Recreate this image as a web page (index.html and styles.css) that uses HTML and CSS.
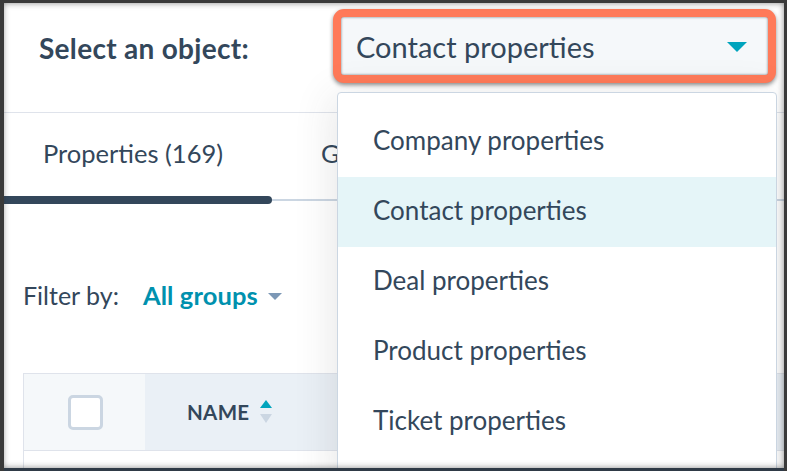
FILE: index.html
```html
<!DOCTYPE html>
<html>
<head>
<meta charset="utf-8">
<link rel="stylesheet" href="styles.css">
</head>
<body>
<div class="frame">
  <header class="topbar">
    <div class="label">Select an object:</div>
    <div class="select-ring">
      <div class="select">
        <span class="select-text">Contact properties</span>
        <span class="caret"></span>
      </div>
    </div>
  </header>

  <nav class="tabs">
    <div class="tab active">Properties (169)</div>
    <div class="tab tab-clipped"><span>Groups</span></div>
  </nav>

  <div class="filter">
    <span class="filter-label">Filter by:</span>
    <span class="filter-value">All groups</span>
    <span class="filter-caret"></span>
  </div>

  <div class="table">
    <div class="thead">
      <div class="th th-check"><span class="checkbox"></span></div>
      <div class="th th-name">NAME
        <span class="sort">
          <span class="sort-up"></span>
          <span class="sort-down"></span>
        </span>
      </div>
    </div>
    <div class="trow"></div>
  </div>

  <ul class="menu">
    <li class="menu-item">Company properties</li>
    <li class="menu-item selected">Contact properties</li>
    <li class="menu-item">Deal properties</li>
    <li class="menu-item">Product properties</li>
    <li class="menu-item">Ticket properties</li>
  </ul>
</div>
</body>
</html>
```

FILE: styles.css
```css
* { box-sizing: border-box; }
html, body { margin: 0; padding: 0; background: #fff; }
body {
  font-family: "Lato", "Noto Sans", sans-serif;
  color: #33475b;
}
.frame {
  position: relative;
  width: 787px;
  height: 471px;
  overflow: hidden;
  background: #fff;
}
.frame::after {
  content: "";
  position: absolute;
  inset: 0;
  pointer-events: none;
  box-shadow: inset 4px 0 0 #3a3a3a, inset 0 3px 0 #3a3a3a, inset -3px 0 0 #3a3a3a, inset 0 -3px 0 #2f3a46, inset 0 0 6px 3px rgba(40,40,40,0.55);
  z-index: 10;
}

/* Header */
.topbar {
  height: 113px;
  display: flex;
  align-items: flex-start;
  padding: 9px 0 0 39px;
  border-bottom: 1px solid #dfe3eb;
}
.label {
  flex: 0 0 294px;
  height: 74px;
  display: flex;
  align-items: center;
  font-weight: 700;
  font-size: 28px;
  letter-spacing: 0.3px;
  padding-top: 3px;
}
.select-ring {
  width: 443px;
  height: 74px;
  border: 8px solid #ff7a59;
  border-radius: 11px;
  box-shadow: 0 2px 4px rgba(0,0,0,0.45);
  background: #f5f8fa;
}
.select {
  height: 100%;
  display: flex;
  align-items: center;
  justify-content: space-between;
  padding: 0 21px 0 15px;
  box-shadow: inset 0 0 2px 1px rgba(70,80,90,0.35);
  border-radius: 2px;
}
.select-text {
  font-size: 29px;
}
.caret {
  width: 0;
  height: 0;
  border-left: 10px solid transparent;
  border-right: 10px solid transparent;
  border-top: 10px solid #00a4bd;
  margin-top: 2px;
}

/* Tabs */
.tabs {
  display: flex;
  height: 88px;
  position: relative;
  border-bottom: 2px solid #cbd6e2;
  margin-bottom: -2px;
}
.tab {
  font-size: 25.5px;
  display: flex;
  align-items: center;
  padding-bottom: 6px;
  white-space: nowrap;
}
.tab.active {
  width: 272px;
  justify-content: center;
  padding-right: 6px;
  position: relative;
}
.tab.active::after {
  content: "";
  position: absolute;
  left: 0;
  right: 0;
  bottom: -5px;
  height: 8px;
  background: #33475b;
  border-radius: 0 4px 4px 0;
}
.tab-clipped {
  width: 65px;
  overflow: hidden;
  padding-left: 49px;
}

/* Filter */
.filter {
  height: 172px;
  display: flex;
  align-items: center;
  padding: 16px 0 0 23px;
  font-size: 25px;
  margin-top: 2px;
}
.filter-label { margin-right: 24px; }
.filter-value {
  color: #0091ae;
  font-weight: 700;
  font-size: 25.5px;
  letter-spacing: 0.1px;
}
.filter-caret {
  width: 0;
  height: 0;
  border-left: 7px solid transparent;
  border-right: 7px solid transparent;
  border-top: 7px solid #7c98b6;
  margin-left: 10px;
  margin-top: 3px;
}

/* Table */
.table {
  margin-left: 23px;
  border-top: 1px solid #dfe3eb;
  border-left: 1px solid #dfe3eb;
}
.thead {
  display: flex;
  height: 77px;
  border-bottom: 1px solid #dfe3eb;
}
.th {
  display: flex;
  align-items: center;
}
.th-check {
  width: 121px;
  background: #f5f8fa;
  justify-content: center;
  padding-left: 2px;
}
.checkbox {
  width: 35px;
  height: 35px;
  border: 3px solid #cbd6e2;
  border-radius: 5px;
  background: #fff;
  margin-top: 1px;
}
.th-name {
  flex: 1;
  background: #eaf0f6;
  padding-left: 42px;
  font-size: 20.5px;
  font-weight: 700;
  letter-spacing: 0.3px;
}
.sort {
  display: flex;
  flex-direction: column;
  gap: 6px;
  margin-left: 11px;
  margin-top: -2px;
}
.sort-up {
  width: 0; height: 0;
  border-left: 6.5px solid transparent;
  border-right: 6.5px solid transparent;
  border-bottom: 8px solid #00a4bd;
}
.sort-down {
  width: 0; height: 0;
  border-left: 6.5px solid transparent;
  border-right: 6.5px solid transparent;
  border-top: 9px solid #cbd6e2;
}
.trow { height: 40px; background: #fff; }

/* Dropdown menu */
.menu {
  position: absolute;
  left: 337px;
  top: 92px;
  width: 440px;
  height: 400px;
  margin: 0;
  padding: 14px 0 0;
  list-style: none;
  background: #fff;
  border: 1px solid #cbd6e2;
  border-radius: 4px;
  box-shadow: -4px 4px 40px rgba(60,60,60,0.12);
  z-index: 5;
}
.menu-item {
  height: 70px;
  display: flex;
  align-items: center;
  padding-left: 35px;
  padding-bottom: 5px;
  font-size: 26px;
}
.menu-item.selected { background: #e5f5f8; }
```
